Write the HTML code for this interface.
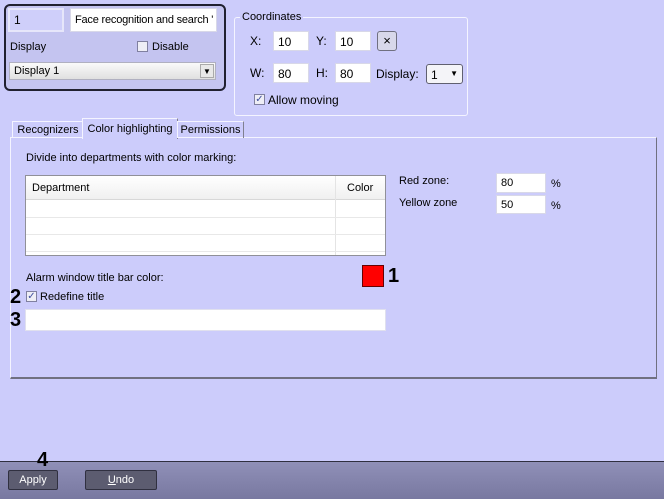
<!DOCTYPE html>
<html><head><style>
body{margin:0;width:664px;height:498px;background:#ccccfb;font-family:"Liberation Sans",sans-serif;font-size:11px;color:#000;position:relative;overflow:hidden}
.a{position:absolute}
.in{position:absolute;background:#fff;box-sizing:border-box;border:1px solid #d8d8e8;padding:3px 4px;font-size:12px}
.n{position:absolute;font-weight:bold;font-size:20px;line-height:20px}
.cb{position:absolute;width:11px;height:11px;box-sizing:border-box;border:1px solid #8080a0;background:#eeeef6;font-size:10px;line-height:9px;text-align:center;color:#4050a0}
</style></head><body>
<div class="a" style="left:4px;top:4px;width:218px;height:83px;border:2px solid #202030;border-radius:6px;background:#c4c4f0"></div>
<div class="in" style="left:8px;top:8px;width:56px;height:24px;background:#cfcffa;border:2px solid #e6e6fa">1</div>
<div class="in" style="left:70px;top:8px;width:147px;height:24px;white-space:nowrap;overflow:hidden;font-size:11px;letter-spacing:-0.2px;padding-top:5px">Face recognition and search '</div>
<div class="a" style="left:10px;top:41px;font-size:11px">Display</div>
<div class="cb" style="left:137px;top:41px"></div>
<div class="a" style="left:152px;top:41px;font-size:11px">Disable</div>
<div class="a" style="left:9px;top:62px;width:207px;height:18px;box-sizing:border-box;background:linear-gradient(#fafafa,#e0e0e0);border:1px solid #b0b0c0;font-size:11px;padding:2px 4px">Display 1</div>
<div class="a" style="left:200px;top:64px;width:14px;height:14px;background:#e8e8e8;border:1px solid #aaa;box-sizing:border-box;font-size:8px;text-align:center;line-height:13px">▼</div>

<div class="a" style="left:234px;top:17px;width:232px;height:97px;border:1px solid #f4f4ff;border-radius:3px"></div>
<div class="a" style="left:240px;top:11px;background:#ccccfb;padding:0 2px;font-size:11px">Coordinates</div>
<div class="a" style="left:250px;top:34px;font-size:12px">X:</div>
<div class="in" style="left:273px;top:31px;width:36px;height:20px">10</div>
<div class="a" style="left:316px;top:34px;font-size:12px">Y:</div>
<div class="in" style="left:335px;top:31px;width:36px;height:20px">10</div>
<div class="a" style="left:377px;top:31px;width:20px;height:20px;box-sizing:border-box;border:1px solid #707080;border-radius:3px;background:#d8d8ea;text-align:center;line-height:18px;font-size:13px">×</div>
<div class="a" style="left:250px;top:66px;font-size:12px">W:</div>
<div class="in" style="left:273px;top:63px;width:36px;height:20px">80</div>
<div class="a" style="left:316px;top:66px;font-size:12px">H:</div>
<div class="in" style="left:335px;top:63px;width:36px;height:20px">80</div>
<div class="a" style="left:376px;top:67px;font-size:12px">Display:</div>
<div class="a" style="left:426px;top:64px;width:37px;height:20px;box-sizing:border-box;border:1px solid #606070;border-radius:3px;background:#f4f4f8;font-size:12px;padding:3px 4px">1<span style="position:absolute;right:4px;top:4px;font-size:8px">▼</span></div>
<div class="cb" style="left:254px;top:94px">✓</div>
<div class="a" style="left:268px;top:93px;font-size:12px">Allow moving</div>

<div class="a" style="left:10px;top:137px;width:645px;height:239px;border:1px solid #f4f4ff;border-right-color:#707080;border-bottom:2px solid #707080"></div>
<div class="a" style="left:12px;top:121px;width:70px;height:16px;border:1px solid #f4f4ff;border-bottom:none;border-right-color:#808090;font-size:11px;text-align:center;line-height:17px">Recognizers</div>
<div class="a" style="left:82px;top:118px;width:94px;height:20px;border:1px solid #f4f4ff;border-bottom:none;border-right-color:#808090;background:#ccccfb;font-size:11px;text-align:center;line-height:20px">Color highlighting</div>
<div class="a" style="left:177px;top:121px;width:65px;height:16px;border:1px solid #f4f4ff;border-bottom:none;border-right-color:#808090;font-size:11px;text-align:center;line-height:17px">Permissions</div>

<div class="a" style="left:26px;top:152px">Divide into departments with color marking:</div>
<div class="a" style="left:25px;top:175px;width:361px;height:81px;box-sizing:border-box;border:1px solid #909098;background:#fff">
<div class="a" style="left:0;top:0;width:359px;height:23px;background:linear-gradient(#fff,#f0f0f0);border-bottom:1px solid #d8d8d8"></div>
<div class="a" style="left:6px;top:6px">Department</div>
<div class="a" style="left:321px;top:6px">Color</div>
<div class="a" style="left:309px;top:0;width:1px;height:79px;background:#e4e4e4"></div>
<div class="a" style="left:0;top:41px;width:359px;height:1px;background:#e8e8e8"></div>
<div class="a" style="left:0;top:58px;width:359px;height:1px;background:#e8e8e8"></div>
<div class="a" style="left:0;top:75px;width:359px;height:1px;background:#e8e8e8"></div>
</div>
<div class="a" style="left:399px;top:175px">Red zone:</div>
<div class="in" style="left:496px;top:173px;width:50px;height:20px;font-size:11px">80</div>
<div class="a" style="left:551px;top:178px">%</div>
<div class="a" style="left:399px;top:197px">Yellow zone</div>
<div class="in" style="left:496px;top:195px;width:50px;height:19px;font-size:11px">50</div>
<div class="a" style="left:551px;top:200px">%</div>

<div class="a" style="left:26px;top:272px">Alarm window title bar color:</div>
<div class="a" style="left:362px;top:265px;width:22px;height:22px;box-sizing:border-box;background:#f00;border:1px solid #600"></div>
<div class="n" style="left:388px;top:266px">1</div>
<div class="n" style="left:10px;top:287px">2</div>
<div class="cb" style="left:26px;top:291px">✓</div>
<div class="a" style="left:40px;top:291px">Redefine title</div>
<div class="n" style="left:10px;top:310px">3</div>
<div class="in" style="left:25px;top:309px;width:361px;height:22px;border-color:#e0e0ee"></div>

<div class="a" style="left:0;top:461px;width:664px;height:37px;border-top:1px solid #303040;background:linear-gradient(#9090b8,#7878a0)"></div>
<div class="n" style="left:37px;top:450px">4</div>
<div class="a" style="left:8px;top:470px;width:50px;height:20px;box-sizing:border-box;border:1px solid #303040;border-radius:2px;background:#5c5c70;color:#fff;text-align:center;line-height:18px">Apply</div>
<div class="a" style="left:85px;top:470px;width:72px;height:20px;box-sizing:border-box;border:1px solid #303040;border-radius:2px;background:#5c5c70;color:#fff;text-align:center;line-height:18px"><u>U</u>ndo</div>
</body></html>
